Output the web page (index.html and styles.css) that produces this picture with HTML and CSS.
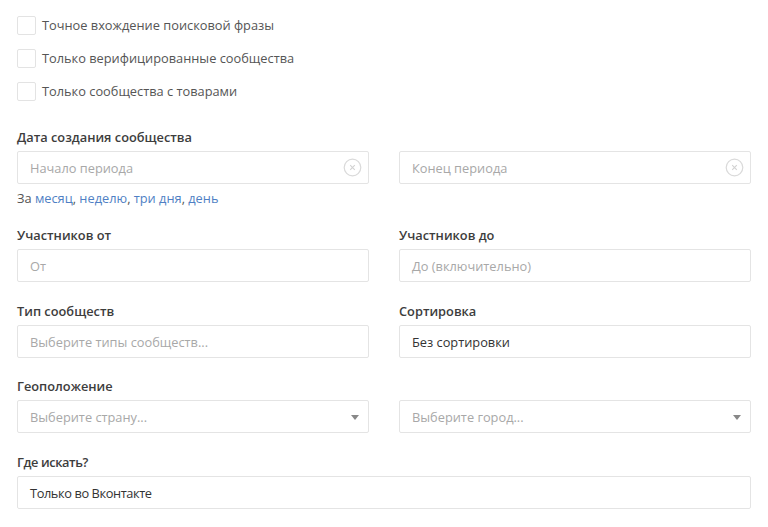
FILE: index.html
```html
<!DOCTYPE html>
<html lang="ru">
<head>
<meta charset="utf-8">
<title>Поиск сообществ</title>
<link rel="stylesheet" href="styles.css">
</head>
<body>
<div class="page">
  <div class="checks">
    <label class="check"><span class="box"></span><span>Точное вхождение поисковой фразы</span></label>
    <label class="check"><span class="box"></span><span>Только верифицированные сообщества</span></label>
    <label class="check"><span class="box"></span><span>Только сообщества с товарами</span></label>
  </div>

  <div class="grid first">
    <div class="field">
      <div class="label">Дата создания сообщества</div>
      <div class="input"><span class="ph">Начало периода</span>
        <svg class="clear" width="19" height="19" viewBox="0 0 19 19"><circle cx="9.5" cy="9.5" r="8.3" fill="none" stroke="#dadada" stroke-width="1.2"/><path d="M7.2 7.2 L11.8 11.8 M11.8 7.2 L7.2 11.8" stroke="#d2d2d2" stroke-width="1.1"/></svg>
      </div>
      <div class="hint">За <a href="#">месяц</a>, <a href="#">неделю</a>, <a href="#">три дня</a>, <a href="#">день</a></div>
    </div>
    <div class="field">
      <div class="label">&nbsp;</div>
      <div class="input"><span class="ph">Конец периода</span>
        <svg class="clear" width="19" height="19" viewBox="0 0 19 19"><circle cx="9.5" cy="9.5" r="8.3" fill="none" stroke="#dadada" stroke-width="1.2"/><path d="M7.2 7.2 L11.8 11.8 M11.8 7.2 L7.2 11.8" stroke="#d2d2d2" stroke-width="1.1"/></svg>
      </div>
    </div>
  </div>

  <div class="grid gap19">
    <div class="field">
      <div class="label">Участников от</div>
      <div class="input"><span class="ph">От</span></div>
    </div>
    <div class="field">
      <div class="label">Участников до</div>
      <div class="input"><span class="ph">До (включительно)</span></div>
    </div>
  </div>

  <div class="grid">
    <div class="field">
      <div class="label">Тип сообществ</div>
      <div class="input"><span class="ph">Выберите типы сообществ...</span></div>
    </div>
    <div class="field">
      <div class="label">Сортировка</div>
      <div class="input"><span class="val">Без сортировки</span></div>
    </div>
  </div>

  <div class="grid gap19">
    <div class="field">
      <div class="label">Геоположение</div>
      <div class="input select"><span class="ph">Выберите страну...</span><span class="arrow"></span></div>
    </div>
    <div class="field">
      <div class="label">&nbsp;</div>
      <div class="input select"><span class="ph">Выберите город...</span><span class="arrow"></span></div>
    </div>
  </div>

  <div class="full">
    <div class="label narrow">Где искать?</div>
    <div class="input"><span class="val narrow">Только во Вконтакте</span></div>
  </div>
</div>
</body>
</html>
```
FILE: styles.css
```css
html, body {
  margin: 0;
  padding: 0;
  background: #ffffff;
}
body {
  font-family: "Open Sans", "Noto Sans", "Liberation Sans", sans-serif;
  font-size: 12.8px;
  color: #555555;
}
.page {
  padding: 16px 17px 0 17px;
  width: 734px;
}
.checks {
  display: flex;
  flex-direction: column;
  gap: 14px;
}
.check {
  display: flex;
  align-items: center;
  gap: 6px;
  height: 19px;
  line-height: 19px;
  color: #555555;
}
.box {
  width: 17px;
  height: 17px;
  border: 1px solid #e3e3e3;
  border-radius: 2px;
  background: #fff;
  flex: none;
}
.grid {
  display: grid;
  grid-template-columns: 352px 352px;
  column-gap: 30px;
  margin-top: 20px;
}
.grid.first {
  margin-top: 27px;
}
.grid.gap19 {
  margin-top: 19px;
}
.field {
  display: flex;
  flex-direction: column;
}
.label {
  font-weight: 600;
  color: #3d3d3d;
  line-height: 18px;
  margin-bottom: 5px;
}
.input {
  position: relative;
  box-sizing: border-box;
  height: 33px;
  border: 1px solid #e4e4e4;
  border-radius: 2px;
  background: #fff;
  display: flex;
  align-items: center;
  padding: 0 12px;
}
.ph {
  color: #a8a8a8;
}
.val {
  color: #333333;
}
.clear {
  position: absolute;
  right: 6px;
  top: 6px;
}
.arrow {
  position: absolute;
  right: 9px;
  top: 14px;
  width: 0;
  height: 0;
  border-left: 4px solid transparent;
  border-right: 4px solid transparent;
  border-top: 5px solid #888888;
}
.hint {
  margin-top: 5px;
  line-height: 18px;
  color: #555555;
}
.hint a {
  color: #4f7fc4;
  text-decoration: none;
}
.full {
  margin-top: 20px;
  display: flex;
  flex-direction: column;
}
.narrow {
  letter-spacing: -0.4px;
}
```
